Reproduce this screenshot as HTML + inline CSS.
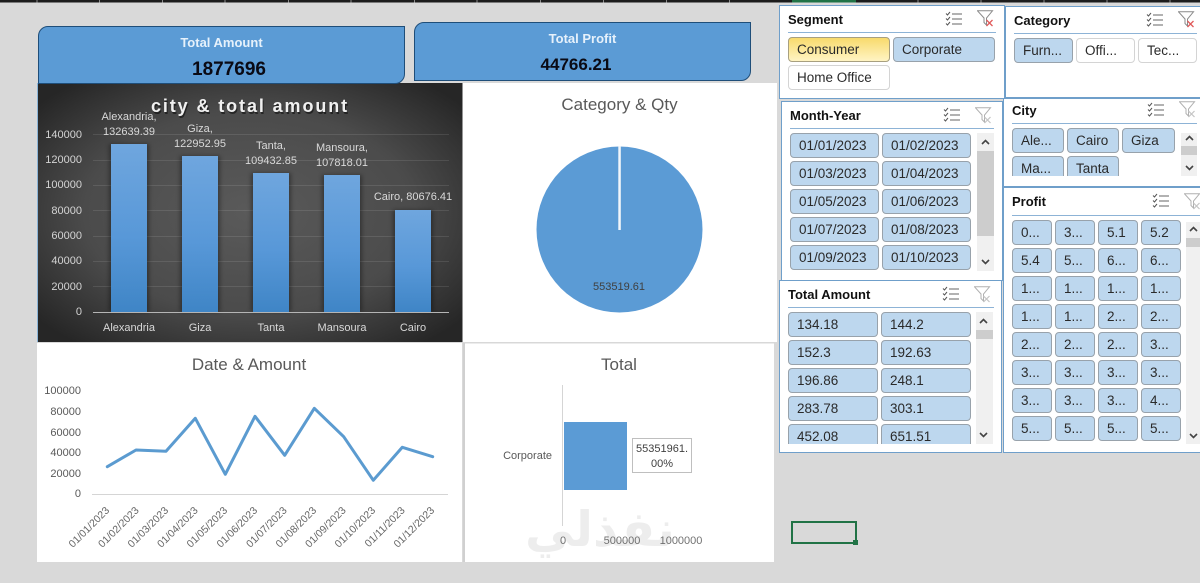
<!DOCTYPE html>
<html><head><meta charset="utf-8"><title>Dashboard</title>
<style>
html,body{margin:0;padding:0;width:1200px;height:583px;overflow:hidden;background:#d9d9d9;font-family:"Liberation Sans",sans-serif}
.abs,.s,.b,.w,.t,.sb,.th,.ln,svg.i{position:absolute}
.s{background:#fff;border:1.5px solid #6f9fca;box-sizing:border-box}
.t{font-weight:bold;font-size:13px;color:#111;line-height:16px;white-space:nowrap;margin-top:1px}
.ln{height:1px;background:#8db3d6}
.b,.w{box-sizing:border-box;height:25px;border:1px solid #98a2ab;border-radius:4px;background:#bdd7ee;font-size:13.5px;line-height:23px;padding-left:8px;color:#2a2a2a;white-space:nowrap;overflow:hidden}
.w{background:#fff;border-color:#d4d4d4}
.c{height:20px;border-bottom:0;border-radius:4px 4px 0 0}
.sb{background:#f0f0f0}
.th{background:#cdcdcd}
.card{position:absolute;box-sizing:border-box;background:#5b9bd5;border:1px solid #1f4e79;border-radius:10px 0 10px 0}
</style></head><body>
<svg width="0" height="0" style="position:absolute"><defs>
<symbol id="ms" viewBox="0 0 18 16"><path d="M1 2.5l1.5 1.5L5 1M1 7.5l1.5 1.5L5 6M1 12.5l1.5 1.5L5 11" fill="none" stroke="#555" stroke-width="1"/><path d="M7 3h10M7 8h10M7 13h10" stroke="#666" stroke-width="1"/></symbol>
<symbol id="fr" viewBox="0 0 17 17"><path d="M.5 .8H15.5L9.5 8V15L7 12.5V8Z" fill="#fff" stroke="#8a8a8a" stroke-width="1"/><path d="M9.5 10l6 6M15.500 10l-6 6" stroke="#e05a5a" stroke-width="1.3"/></symbol>
<symbol id="fg" viewBox="0 0 17 17"><path d="M.5 .8H15.5L9.5 8V15L7 12.5V8Z" fill="#fff" stroke="#b0b0b0" stroke-width="1"/><path d="M9.5 10l6 6M15.500 10l-6 6" stroke="#c4c4c4" stroke-width="1.2"/></symbol>
<symbol id="up" viewBox="0 0 9 6"><path d="M1 5l3.5-3.5L8 5" fill="none" stroke="#444" stroke-width="1.6"/></symbol>
<symbol id="dn" viewBox="0 0 9 6"><path d="M1 1l3.5 3.5L8 1" fill="none" stroke="#444" stroke-width="1.6"/></symbol>
<radialGradient id="dk" cx="50%" cy="50%" r="65%"><stop offset="0" stop-color="#5a5a5a"/><stop offset=".6" stop-color="#4b4b4b"/><stop offset="1" stop-color="#262626"/></radialGradient>
<linearGradient id="bar" x1="0" y1="0" x2="0" y2="1"><stop offset="0" stop-color="#6fa6de"/><stop offset=".55" stop-color="#5898d8"/><stop offset="1" stop-color="#3f85c6"/></linearGradient>
<filter id="sh" x="-30%" y="-30%" width="160%" height="160%"><feGaussianBlur stdDeviation="2"/></filter>
</defs></svg>

<!-- top sheet edge -->
<svg class="abs" style="left:0;top:0" width="1200" height="3">
<rect width="1200" height="2.5" fill="#1c1c1c"/><rect x="792" width="64" height="2.5" fill="#217346"/>
<path d="M37 0V2.5M99.500 0V2.500M162.500 0V2.500M225 0V2.500M288.500 0V2.500M351 0V2.500M414.500 0V2.500M477 0V2.500M540.500 0V2.500M603.500 0V2.500M666.500 0V2.500M729.500 0V2.500M918 0V2.500M981 0V2.500M1044 0V2.500M1107 0V2.500M1170 0V2.500" stroke="#8a8a8a" stroke-width="1"/></svg>

<!-- charts -->
<svg class="abs" style="left:0;top:0" width="1200" height="583" font-family="'Liberation Sans',sans-serif">
<rect x="462" y="83" width="315" height="259" fill="#fff"/>
<rect x="37" y="343" width="425" height="219" fill="#fff"/>
<rect x="465" y="343" width="309" height="219" fill="#fff"/>
<rect x="463" y="343" width="2" height="219" fill="#d0d0d0"/>
<rect x="465" y="342" width="310" height="1.500" fill="#d8d8d8"/>

<!-- dark chart -->
<rect x="37.500" y="83" width="425" height="259" fill="url(#dk)"/>
<rect x="37" y="83" width="1" height="259" fill="#8ab4d8"/>
<g stroke="#fff" stroke-opacity=".1" stroke-width="1">
<path d="M93 134.500H449M93 160.500H449M93 185.500H449M93 210.500H449M93 236.500H449M93 261.500H449M93 286.500H449"/></g>
<g fill="#000" opacity=".35" filter="url(#sh)"><rect x="109" y="144" width="40" height="168"/><rect x="180" y="156" width="40" height="156"/><rect x="251" y="173" width="40" height="139"/><rect x="322" y="175" width="40" height="137"/><rect x="393" y="210" width="40" height="102"/></g>
<rect x="111" y="144" width="36" height="168" fill="url(#bar)"/>
<rect x="182" y="156" width="36" height="156" fill="url(#bar)"/>
<rect x="253" y="173" width="36" height="139" fill="url(#bar)"/>
<rect x="324" y="175" width="36" height="137" fill="url(#bar)"/>
<rect x="395" y="210" width="36" height="102" fill="url(#bar)"/>
<path d="M93 312.500H449" stroke="#b5b5b5" stroke-width="1"/>
<text x="250" y="112" text-anchor="middle" font-size="18" font-weight="bold" fill="#000" opacity=".5" letter-spacing="1.9" transform="translate(1,2)">city &amp; total amount</text>
<text x="250" y="112" text-anchor="middle" font-size="18" font-weight="bold" fill="#f0f0f0" letter-spacing="1.9">city &amp; total amount</text>
<g font-size="11" fill="#d4d4d4" text-anchor="end">
<text x="82" y="138">140000</text><text x="82" y="163">120000</text><text x="82" y="188">100000</text><text x="82" y="214">80000</text><text x="82" y="239">60000</text><text x="82" y="264">40000</text><text x="82" y="290">20000</text><text x="82" y="315">0</text></g>
<g font-size="11" fill="#d9d9d9" text-anchor="middle">
<text x="129" y="120">Alexandria,</text><text x="129" y="135">132639.39</text>
<text x="200" y="132">Giza,</text><text x="200" y="147">122952.95</text>
<text x="271" y="149">Tanta,</text><text x="271" y="164">109432.85</text>
<text x="342" y="151">Mansoura,</text><text x="342" y="166">107818.01</text>
<text x="413" y="200">Cairo, 80676.41</text>
<text x="129" y="331">Alexandria</text><text x="200" y="331">Giza</text><text x="271" y="331">Tanta</text><text x="342" y="331">Mansoura</text><text x="413" y="331">Cairo</text></g>

<!-- pie -->
<text x="619.500" y="110" text-anchor="middle" font-size="17" fill="#595959">Category &amp; Qty</text>
<circle cx="619.500" cy="229.500" r="83" fill="#5b9bd5"/>
<rect x="618.300" y="146" width="2.500" height="84" fill="#f2f6fa"/>
<text x="619" y="290" text-anchor="middle" font-size="11" fill="#404040">553519.61</text>

<!-- line -->
<text x="249" y="370" text-anchor="middle" font-size="17" fill="#595959">Date &amp; Amount</text>
<g font-size="11" fill="#595959" text-anchor="end">
<text x="81" y="394">100000</text><text x="81" y="415">80000</text><text x="81" y="436">60000</text><text x="81" y="456">40000</text><text x="81" y="477">20000</text><text x="81" y="497">0</text></g>
<path d="M92 494.500H448" stroke="#d5d5d5" stroke-width="1"/>
<polyline points="107.300,466.700 136,450 166,451.300 195.300,418.300 225.300,474.300 255,416.300 284.700,455.300 314.300,408.300 343.700,436.700 373.300,480.300 402.300,447.300 432.700,456.700" fill="none" stroke="#5b9bd0" stroke-width="3" stroke-linejoin="round" stroke-linecap="round"/>
<g font-size="10.500" fill="#666" text-anchor="end">
<text transform="translate(110,511) rotate(-45)">01/01/2023</text>
<text transform="translate(139.500,511) rotate(-45)">01/02/2023</text>
<text transform="translate(169,511) rotate(-45)">01/03/2023</text>
<text transform="translate(198.500,511) rotate(-45)">01/04/2023</text>
<text transform="translate(228,511) rotate(-45)">01/05/2023</text>
<text transform="translate(258,511) rotate(-45)">01/06/2023</text>
<text transform="translate(287.500,511) rotate(-45)">01/07/2023</text>
<text transform="translate(317,511) rotate(-45)">01/08/2023</text>
<text transform="translate(346.500,511) rotate(-45)">01/09/2023</text>
<text transform="translate(376,511) rotate(-45)">01/10/2023</text>
<text transform="translate(405.500,511) rotate(-45)">01/11/2023</text>
<text transform="translate(435,511) rotate(-45)">01/12/2023</text></g>

<!-- total bar -->
<text x="619" y="370" text-anchor="middle" font-size="17" fill="#595959">Total</text>
<text x="600" y="546" text-anchor="middle" font-size="49" font-weight="bold" fill="#000" opacity=".065" font-family="'DejaVu Sans',sans-serif">نفذلي</text>
<path d="M562.500 385V526" stroke="#d5d5d5" stroke-width="1"/>
<rect x="564" y="422" width="63" height="68" fill="#5b9bd5"/>
<rect x="632.500" y="438.500" width="59" height="34" fill="#fff" stroke="#bfbfbf"/>
<g font-size="11" fill="#404040" text-anchor="middle"><text x="662" y="452">55351961.</text><text x="662" y="467">00%</text></g>
<text x="552" y="459" text-anchor="end" font-size="11" fill="#595959">Corporate</text>
<g font-size="11" fill="#595959" text-anchor="middle" opacity=".85"><text x="563" y="544">0</text><text x="622" y="544">500000</text><text x="681" y="544">1000000</text></g>

<!-- selected cell -->
<rect x="792" y="522" width="64" height="21" fill="none" stroke="#217346" stroke-width="2"/>
<rect x="853" y="540" width="5" height="5" fill="#217346"/>
</svg>

<!-- KPI cards -->
<div class="card" style="left:38px;top:26px;width:367px;height:58px"></div>
<div class="abs" style="left:38px;width:367px;top:35px;text-align:center;font-weight:bold;font-size:13px;line-height:16px;color:#e6f1fb">Total Amount</div>
<div class="abs" style="left:129px;width:200px;top:58px;text-align:center;font-weight:bold;font-size:19px;line-height:23px;color:#0a0a14">1877696</div>
<div class="card" style="left:414px;top:22px;width:337px;height:59px"></div>
<div class="abs" style="left:414px;width:337px;top:31px;text-align:center;font-weight:bold;font-size:13px;line-height:16px;color:#e6f1fb">Total Profit</div>
<div class="abs" style="left:476px;width:200px;top:54px;text-align:center;font-weight:bold;font-size:17px;line-height:22px;color:#0a0a14">44766.21</div>

<!-- Category slicer -->
<div class="s" style="left:1005px;top:6px;width:197px;height:92px"></div>
<div class="t" style="left:1014px;top:12px">Category</div><div class="ln" style="left:1014px;top:33px;width:183px"></div>
<svg class="i" style="left:1146px;top:12px" width="18" height="16"><use href="#ms"/></svg>
<svg class="i" style="left:1178px;top:11px" width="17" height="17"><use href="#fr"/></svg>
<div class="b" style="left:1014px;top:38px;width:59px">Furn...</div>
<div class="w" style="left:1076px;top:38px;width:59px">Offi...</div>
<div class="w" style="left:1138px;top:38px;width:59px">Tec...</div>

<!-- City slicer -->
<div class="s" style="left:1003px;top:98px;width:199px;height:89px"></div>
<div class="t" style="left:1012px;top:102px">City</div><div class="ln" style="left:1012px;top:123px;width:185px"></div>
<svg class="i" style="left:1147px;top:102px" width="18" height="16"><use href="#ms"/></svg>
<svg class="i" style="left:1179px;top:101px" width="17" height="17"><use href="#fg"/></svg>
<div class="b" style="left:1012px;top:128px;width:52px">Ale...</div>
<div class="b" style="left:1067px;top:128px;width:52px">Cairo</div>
<div class="b" style="left:1122px;top:128px;width:53px">Giza</div>
<div class="b c" style="left:1012px;top:156px;width:52px">Ma...</div>
<div class="b c" style="left:1067px;top:156px;width:52px">Tanta</div>
<div class="sb" style="left:1181px;top:133px;width:16px;height:43px"></div><div class="th" style="left:1181px;top:146px;width:16px;height:9px"></div>
<svg class="i" style="left:1185px;top:135px" width="9" height="6"><use href="#up"/></svg>
<svg class="i" style="left:1185px;top:165px" width="9" height="6"><use href="#dn"/></svg>

<!-- Profit slicer -->
<div class="s" style="left:1003px;top:187px;width:199px;height:266px"></div>
<div class="t" style="left:1012px;top:193px">Profit</div><div class="ln" style="left:1012px;top:215px;width:188px"></div>
<svg class="i" style="left:1152px;top:193px" width="18" height="16"><use href="#ms"/></svg>
<svg class="i" style="left:1184px;top:193px" width="17" height="17"><use href="#fg"/></svg>
<div class="b" style="left:1012px;top:220px;width:40px">0...</div><div class="b" style="left:1055px;top:220px;width:40px">3...</div><div class="b" style="left:1098px;top:220px;width:40px">5.1</div><div class="b" style="left:1141px;top:220px;width:40px">5.2</div>
<div class="b" style="left:1012px;top:248px;width:40px">5.4</div><div class="b" style="left:1055px;top:248px;width:40px">5...</div><div class="b" style="left:1098px;top:248px;width:40px">6...</div><div class="b" style="left:1141px;top:248px;width:40px">6...</div>
<div class="b" style="left:1012px;top:276px;width:40px">1...</div><div class="b" style="left:1055px;top:276px;width:40px">1...</div><div class="b" style="left:1098px;top:276px;width:40px">1...</div><div class="b" style="left:1141px;top:276px;width:40px">1...</div>
<div class="b" style="left:1012px;top:304px;width:40px">1...</div><div class="b" style="left:1055px;top:304px;width:40px">1...</div><div class="b" style="left:1098px;top:304px;width:40px">2...</div><div class="b" style="left:1141px;top:304px;width:40px">2...</div>
<div class="b" style="left:1012px;top:332px;width:40px">2...</div><div class="b" style="left:1055px;top:332px;width:40px">2...</div><div class="b" style="left:1098px;top:332px;width:40px">2...</div><div class="b" style="left:1141px;top:332px;width:40px">3...</div>
<div class="b" style="left:1012px;top:360px;width:40px">3...</div><div class="b" style="left:1055px;top:360px;width:40px">3...</div><div class="b" style="left:1098px;top:360px;width:40px">3...</div><div class="b" style="left:1141px;top:360px;width:40px">3...</div>
<div class="b" style="left:1012px;top:388px;width:40px">3...</div><div class="b" style="left:1055px;top:388px;width:40px">3...</div><div class="b" style="left:1098px;top:388px;width:40px">3...</div><div class="b" style="left:1141px;top:388px;width:40px">4...</div>
<div class="b" style="left:1012px;top:416px;width:40px">5...</div><div class="b" style="left:1055px;top:416px;width:40px">5...</div><div class="b" style="left:1098px;top:416px;width:40px">5...</div><div class="b" style="left:1141px;top:416px;width:40px">5...</div>
<div class="sb" style="left:1186px;top:222px;width:14px;height:222px"></div><div class="th" style="left:1186px;top:238px;width:14px;height:9px"></div>
<svg class="i" style="left:1189px;top:226px" width="9" height="6"><use href="#up"/></svg>
<svg class="i" style="left:1189px;top:433px" width="9" height="6"><use href="#dn"/></svg>

<!-- Segment slicer -->
<div class="s" style="left:779px;top:5px;width:226px;height:94px"></div>
<div class="t" style="left:788px;top:11px">Segment</div><div class="ln" style="left:788px;top:32px;width:208px"></div>
<svg class="i" style="left:945px;top:11px" width="18" height="16"><use href="#ms"/></svg>
<svg class="i" style="left:977px;top:10px" width="17" height="17"><use href="#fr"/></svg>
<div class="b" style="left:788px;top:37px;width:102px;background:linear-gradient(#f8da6c,#fff4c4);border-color:#a8a080">Consumer</div>
<div class="b" style="left:893px;top:37px;width:102px">Corporate</div>
<div class="w" style="left:788px;top:65px;width:102px">Home Office</div>

<!-- Month-Year slicer -->
<div class="s" style="left:781px;top:101px;width:222px;height:180px"></div>
<div class="t" style="left:790px;top:107px">Month-Year</div><div class="ln" style="left:790px;top:128px;width:204px"></div>
<svg class="i" style="left:943px;top:107px" width="18" height="16"><use href="#ms"/></svg>
<svg class="i" style="left:975px;top:107px" width="17" height="17"><use href="#fg"/></svg>
<div class="b" style="left:790px;top:133px;width:89px">01/01/2023</div><div class="b" style="left:882px;top:133px;width:89px">01/02/2023</div>
<div class="b" style="left:790px;top:161px;width:89px">01/03/2023</div><div class="b" style="left:882px;top:161px;width:89px">01/04/2023</div>
<div class="b" style="left:790px;top:189px;width:89px">01/05/2023</div><div class="b" style="left:882px;top:189px;width:89px">01/06/2023</div>
<div class="b" style="left:790px;top:217px;width:89px">01/07/2023</div><div class="b" style="left:882px;top:217px;width:89px">01/08/2023</div>
<div class="b" style="left:790px;top:245px;width:89px">01/09/2023</div><div class="b" style="left:882px;top:245px;width:89px">01/10/2023</div>
<div class="sb" style="left:977px;top:133px;width:17px;height:138px"></div><div class="th" style="left:977px;top:151px;width:17px;height:85px"></div>
<svg class="i" style="left:981px;top:139px" width="9" height="6"><use href="#up"/></svg>
<svg class="i" style="left:981px;top:259px" width="9" height="6"><use href="#dn"/></svg>

<!-- Total Amount slicer -->
<div class="s" style="left:779px;top:280px;width:223px;height:173px"></div>
<div class="t" style="left:788px;top:286px">Total Amount</div><div class="ln" style="left:788px;top:307px;width:206px"></div>
<svg class="i" style="left:942px;top:286px" width="18" height="16"><use href="#ms"/></svg>
<svg class="i" style="left:974px;top:286px" width="17" height="17"><use href="#fg"/></svg>
<div class="b" style="left:788px;top:312px;width:90px">134.18</div><div class="b" style="left:881px;top:312px;width:90px">144.2</div>
<div class="b" style="left:788px;top:340px;width:90px">152.3</div><div class="b" style="left:881px;top:340px;width:90px">192.63</div>
<div class="b" style="left:788px;top:368px;width:90px">196.86</div><div class="b" style="left:881px;top:368px;width:90px">248.1</div>
<div class="b" style="left:788px;top:396px;width:90px">283.78</div><div class="b" style="left:881px;top:396px;width:90px">303.1</div>
<div class="b c" style="left:788px;top:424px;width:90px">452.08</div><div class="b c" style="left:881px;top:424px;width:90px">651.51</div>
<div class="sb" style="left:976px;top:312px;width:17px;height:132px"></div><div class="th" style="left:976px;top:330px;width:17px;height:9px"></div>
<svg class="i" style="left:979px;top:318px" width="9" height="6"><use href="#up"/></svg>
<svg class="i" style="left:979px;top:432px" width="9" height="6"><use href="#dn"/></svg>
</body></html>
